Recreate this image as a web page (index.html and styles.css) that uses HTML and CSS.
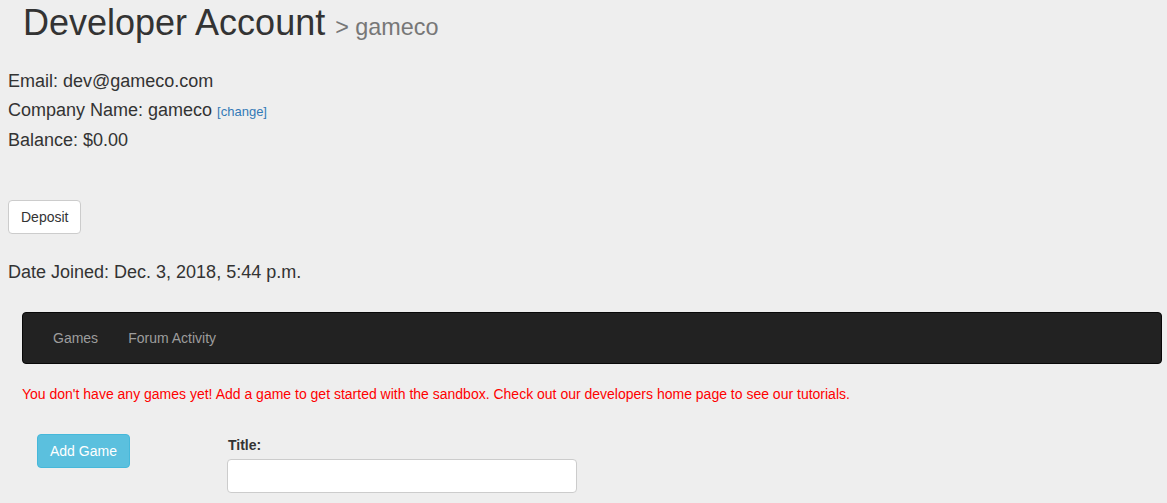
FILE: index.html
```html
<!DOCTYPE html>
<html>
<head>
<meta charset="utf-8">
<link rel="stylesheet" href="styles.css">
</head>
<body>
<div class="page">
  <h1 class="title">Developer Account <small class="sub">&gt; gameco</small></h1>
  <div class="info">
    <div class="line">Email: dev@gameco.com</div>
    <div class="line">Company Name: gameco <a class="change" href="#">[change]</a></div>
    <div class="line">Balance: $0.00</div>
  </div>
  <button class="btn btn-default deposit">Deposit</button>
  <div class="info joined">
    <div class="line">Date Joined: Dec. 3, 2018, 5:44 p.m.</div>
  </div>
  <div class="section">
    <nav class="navbar">
      <ul class="nav">
        <li><a href="#">Games</a></li>
        <li><a href="#">Forum Activity</a></li>
      </ul>
    </nav>
    <p class="warning">You don't have any games yet! Add a game to get started with the sandbox. Check out our developers home page to see our tutorials.</p>
    <div class="row">
      <div class="col-btn">
        <button class="btn btn-info">Add Game</button>
      </div>
      <div class="col-form">
        <label class="label">Title:</label>
        <input class="input" type="text">
      </div>
    </div>
  </div>
</div>
</body>
</html>
```

FILE: styles.css
```css
html, body {
  margin: 0;
  padding: 0;
}
body {
  background: #eeeeee;
  color: #333333;
  font-family: "Liberation Sans", Arial, sans-serif;
  font-size: 14px;
  line-height: 1.42857;
}
.page {
  padding: 0 8px;
}
.title {
  margin: 3px 0 0 0;
  padding-left: 15px;
  font-size: 36px;
  font-weight: 500;
  line-height: 39.6px;
  color: #333;
}
.sub {
  font-size: 65%;
  color: #777777;
  font-weight: 400;
}
.info {
  margin-top: 19px;
  font-size: 18px;
  line-height: 29px;
}
.change {
  font-size: 13px;
  color: #337ab7;
  text-decoration: none;
}
.btn {
  display: inline-block;
  font-family: "Liberation Sans", Arial, sans-serif;
  font-size: 14px;
  line-height: 20px;
  padding: 6px 12px;
  border: 1px solid transparent;
  border-radius: 4px;
  cursor: pointer;
}
.btn-default {
  background: #ffffff;
  border-color: #cccccc;
  color: #333333;
}
.deposit {
  margin-top: 45px;
  display: block;
}
.joined {
  margin-top: 24px;
}
.section {
  padding: 0 0 0 14px;
  margin: 25px -3px 0 0;
}
.navbar {
  background: #222222;
  border: 1px solid #080808;
  border-radius: 4px;
  min-height: 50px;
  padding: 0 15px;
}
.nav {
  list-style: none;
  margin: 0;
  padding: 0;
  display: flex;
}
.nav a {
  display: block;
  padding: 15px;
  line-height: 20px;
  color: #9d9d9d;
  text-decoration: none;
}
.warning {
  color: #ff0000;
  margin: 21px 0 0 0;
  font-size: 14px;
}
.row {
  display: flex;
  margin-top: 29px;
}
.col-btn {
  width: 205px;
  padding-left: 15px;
  box-sizing: border-box;
}
.btn-info {
  background: #5bc0de;
  border-color: #46b8da;
  color: #ffffff;
}
.col-form {
  padding-top: 2px;
}
.label {
  display: block;
  font-weight: 700;
  margin: 0 0 3px 1px;
}
.input {
  display: block;
  width: 350px;
  height: 34px;
  box-sizing: border-box;
  border: 1px solid #cccccc;
  border-radius: 4px;
  background: #fff;
  padding: 6px 12px;
}
```
